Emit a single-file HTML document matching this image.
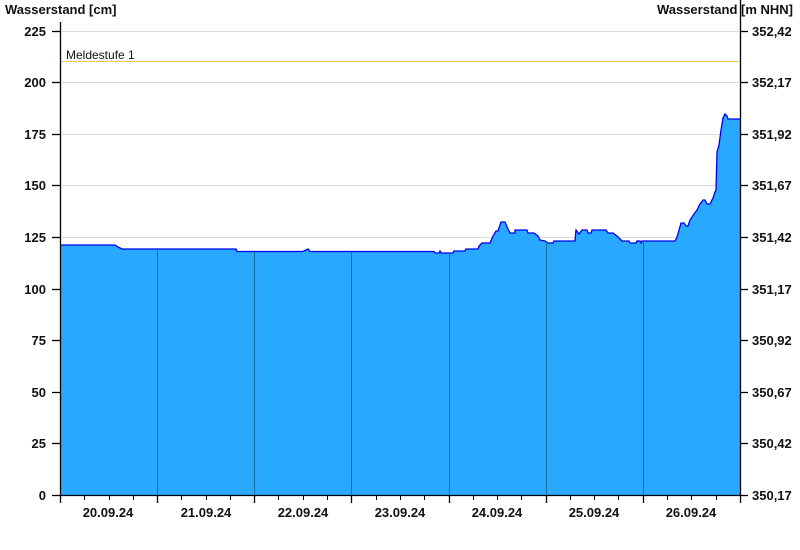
<!DOCTYPE html>
<html><head><meta charset="utf-8"><style>
body{margin:0;background:#fff;}
svg{display:block;font-family:"Liberation Sans",Arial,sans-serif;}
.t{font-size:13px;font-weight:bold;fill:#111;}
.h{font-size:13px;font-weight:bold;fill:#111;}
</style></head><body>
<svg width="800" height="550" viewBox="0 0 800 550">
<rect width="800" height="550" fill="#fff"/>
<text x="5" y="14" class="h">Wasserstand [cm]</text>
<text x="793" y="14" class="h" text-anchor="end">Wasserstand [m NHN]</text>
<g stroke="#dddddd" stroke-width="1">
<line x1="60" y1="31.5" x2="740" y2="31.5"/>
<line x1="60" y1="82.5" x2="740" y2="82.5"/>
<line x1="60" y1="134.5" x2="740" y2="134.5"/>
<line x1="60" y1="185.5" x2="740" y2="185.5"/>
<line x1="60" y1="237.5" x2="740" y2="237.5"/>
</g>
<line x1="60" y1="61.5" x2="740" y2="61.5" stroke="#f0c850" stroke-width="1"/>
<text x="66" y="59" font-size="12" fill="#111">Meldestufe 1</text>
<path d="M60,245 L115,245 L118,247 L122,249 L236,249 L237,251.5 L303,251.5 L306,250 L308,249 L310,251.5 L434,251.5 L435,253 L439,253 L440,251 L441,253 L453,253 L454,251 L465,251 L466,249 L478,249 L479,246 L482,243 L490,243 L493,236 L496,231 L498,231 L501,222 L505,222 L508,229 L510,233 L515,233 L515,230 L527,230 L528,233 L534,233 L538,236 L540,240 L545,241 L548,243 L553,243 L554,241 L575,241 L576,230 L579,234 L582,230 L587,230 L588,233 L591,233 L592,230 L606,230 L608,233 L613,233 L617,236 L620,239 L622,241 L629,241 L630,243 L636,243 L637,241 L640,241 L641,243 L642,241 L675,241 L677,237 L679,230 L681,223 L684,223 L686,226 L688,226 L690,220 L694,214 L697,210 L700,204 L703,200 L705,200 L707,204 L710,204 L713,198 L715,192 L716,190 L717,152 L719,145 L721,130 L723,118 L725,114 L727,116 L728,119 L740,119 L740,495 L60,495 Z" fill="#29a8ff" stroke="none"/>
<path d="M60,245 L115,245 L118,247 L122,249 L236,249 L237,251.5 L303,251.5 L306,250 L308,249 L310,251.5 L434,251.5 L435,253 L439,253 L440,251 L441,253 L453,253 L454,251 L465,251 L466,249 L478,249 L479,246 L482,243 L490,243 L493,236 L496,231 L498,231 L501,222 L505,222 L508,229 L510,233 L515,233 L515,230 L527,230 L528,233 L534,233 L538,236 L540,240 L545,241 L548,243 L553,243 L554,241 L575,241 L576,230 L579,234 L582,230 L587,230 L588,233 L591,233 L592,230 L606,230 L608,233 L613,233 L617,236 L620,239 L622,241 L629,241 L630,243 L636,243 L637,241 L640,241 L641,243 L642,241 L675,241 L677,237 L679,230 L681,223 L684,223 L686,226 L688,226 L690,220 L694,214 L697,210 L700,204 L703,200 L705,200 L707,204 L710,204 L713,198 L715,192 L716,190 L717,152 L719,145 L721,130 L723,118 L725,114 L727,116 L728,119 L740,119" fill="none" stroke="#0000ee" stroke-width="1.3"/>
<g stroke="#1f6a99" stroke-width="1">
<line x1="157.5" y1="248" x2="157.5" y2="495"/>
<line x1="254.5" y1="252" x2="254.5" y2="495"/>
<line x1="351.5" y1="252" x2="351.5" y2="495"/>
<line x1="449.5" y1="253" x2="449.5" y2="495"/>
<line x1="546.5" y1="242" x2="546.5" y2="495"/>
<line x1="643.5" y1="242" x2="643.5" y2="495"/>
</g>
<g stroke="#000" stroke-width="1.3">
<line x1="60.5" y1="22" x2="60.5" y2="496"/>
<line x1="740.5" y1="0" x2="740.5" y2="496"/>
<line x1="60" y1="495.5" x2="741" y2="495.5"/>
<line x1="52" y1="31.5" x2="60" y2="31.5"/><line x1="52" y1="82.5" x2="60" y2="82.5"/><line x1="52" y1="134.5" x2="60" y2="134.5"/><line x1="52" y1="185.5" x2="60" y2="185.5"/><line x1="52" y1="237.5" x2="60" y2="237.5"/><line x1="52" y1="289.5" x2="60" y2="289.5"/><line x1="52" y1="340.5" x2="60" y2="340.5"/><line x1="52" y1="392.5" x2="60" y2="392.5"/><line x1="52" y1="443.5" x2="60" y2="443.5"/><line x1="52" y1="495.5" x2="60" y2="495.5"/>
<line x1="740" y1="31.5" x2="748" y2="31.5"/><line x1="740" y1="82.5" x2="748" y2="82.5"/><line x1="740" y1="134.5" x2="748" y2="134.5"/><line x1="740" y1="185.5" x2="748" y2="185.5"/><line x1="740" y1="237.5" x2="748" y2="237.5"/><line x1="740" y1="289.5" x2="748" y2="289.5"/><line x1="740" y1="340.5" x2="748" y2="340.5"/><line x1="740" y1="392.5" x2="748" y2="392.5"/><line x1="740" y1="443.5" x2="748" y2="443.5"/><line x1="740" y1="495.5" x2="748" y2="495.5"/>
<line x1="60.5" y1="495" x2="60.5" y2="503"/><line x1="157.5" y1="495" x2="157.5" y2="503"/><line x1="254.5" y1="495" x2="254.5" y2="503"/><line x1="351.5" y1="495" x2="351.5" y2="503"/><line x1="449.5" y1="495" x2="449.5" y2="503"/><line x1="546.5" y1="495" x2="546.5" y2="503"/><line x1="643.5" y1="495" x2="643.5" y2="503"/><line x1="740.5" y1="495" x2="740.5" y2="503"/>
</g>
<g stroke="#000" stroke-width="1">
<line x1="84.5" y1="495" x2="84.5" y2="500"/><line x1="109.5" y1="495" x2="109.5" y2="500"/><line x1="133.5" y1="495" x2="133.5" y2="500"/>
<line x1="181.5" y1="495" x2="181.5" y2="500"/><line x1="206.5" y1="495" x2="206.5" y2="500"/><line x1="230.5" y1="495" x2="230.5" y2="500"/>
<line x1="278.5" y1="495" x2="278.5" y2="500"/><line x1="303.5" y1="495" x2="303.5" y2="500"/><line x1="327.5" y1="495" x2="327.5" y2="500"/>
<line x1="376.5" y1="495" x2="376.5" y2="500"/><line x1="400.5" y1="495" x2="400.5" y2="500"/><line x1="424.5" y1="495" x2="424.5" y2="500"/>
<line x1="473.5" y1="495" x2="473.5" y2="500"/><line x1="497.5" y1="495" x2="497.5" y2="500"/><line x1="521.5" y1="495" x2="521.5" y2="500"/>
<line x1="570.5" y1="495" x2="570.5" y2="500"/><line x1="594.5" y1="495" x2="594.5" y2="500"/><line x1="618.5" y1="495" x2="618.5" y2="500"/>
<line x1="667.5" y1="495" x2="667.5" y2="500"/><line x1="691.5" y1="495" x2="691.5" y2="500"/><line x1="716.5" y1="495" x2="716.5" y2="500"/>
</g>
<g class="t" text-anchor="end">
<text x="46" y="36">225</text><text x="46" y="87">200</text><text x="46" y="139">175</text><text x="46" y="190">150</text><text x="46" y="242">125</text><text x="46" y="294">100</text><text x="46" y="345">75</text><text x="46" y="397">50</text><text x="46" y="448">25</text><text x="46" y="500">0</text>
</g>
<g class="t">
<text x="752" y="36">352,42</text><text x="752" y="87">352,17</text><text x="752" y="139">351,92</text><text x="752" y="190">351,67</text><text x="752" y="242">351,42</text><text x="752" y="294">351,17</text><text x="752" y="345">350,92</text><text x="752" y="397">350,67</text><text x="752" y="448">350,42</text><text x="752" y="500">350,17</text>
</g>
<g class="t" text-anchor="middle">
<text x="108" y="517">20.09.24</text><text x="206" y="517">21.09.24</text><text x="303" y="517">22.09.24</text><text x="400" y="517">23.09.24</text><text x="497" y="517">24.09.24</text><text x="594" y="517">25.09.24</text><text x="691" y="517">26.09.24</text>
</g>
</svg>
</body></html>
